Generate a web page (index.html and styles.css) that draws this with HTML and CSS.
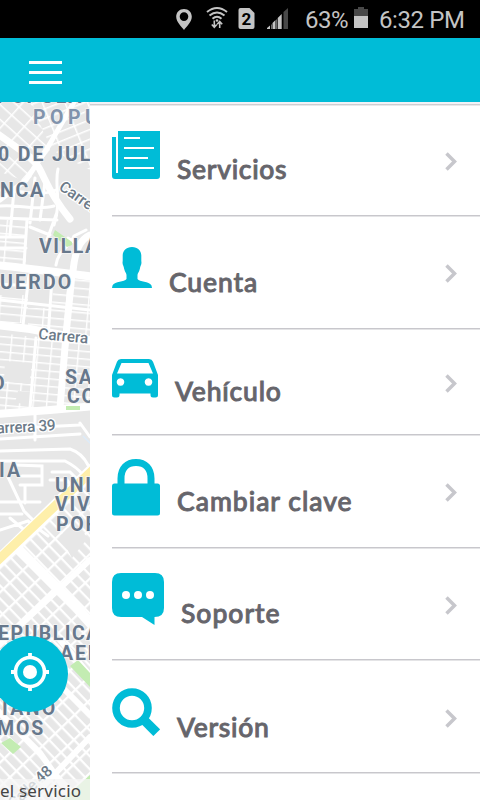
FILE: index.html
```html
<!DOCTYPE html>
<html lang="es">
<head>
<meta charset="utf-8">
<title>Menú</title>
<link rel="stylesheet" href="styles.css">
</head>
<body>
<div class="status">
  <svg class="status-icons" viewBox="0 0 120 38" width="120" height="38">
    <path fill="#c4c4c4" fill-rule="evenodd" d="M14 9c-4.500 0-7.800 3.400-7.800 7.700C6.200 22 12 27 14 30c2-3 7.800-8 7.800-13.300C21.800 12.400 18.500 9 14 9zm0 3.300a4.300 4.300 0 1 1 0 8.600 4.300 4.300 0 0 1 0-8.600z"/>
    <g fill="none" stroke="#c4c4c4" stroke-width="2">
      <path d="M37 12q10-8 20 0M39.500 15.500q7.500-6 15 0M42.500 18.700q4.500-4 9 0"/>
      <path stroke-width="1.600" d="M44.300 20.500v6.500m-2.500-2.500 2.500 2.800 2.500-2.800M49.700 28v-6m-2.500 2.200 2.500-2.700 2.500 2.700"/>
    </g>
    <circle cx="47" cy="20.500" r="1.300" fill="#c4c4c4"/>
    <path fill="#c4c4c4" d="M70.500 8h9l5 5v14q0 2-2 2h-12q-2 0-2-2V10q0-2 2-2z"/>
    <text x="76.500" y="24.500" class="sim">2</text>
    <path fill="#c4c4c4" d="M97 29v-1l3-2.500V29zM102.500 29v-6l3-3v9zM107.700 29V18l4-4v15z"/>
    <path fill="#c4c4c4" opacity=".55" d="M101 29v-4l1-1v5zM106 29v-9l1-1v10z"/>
    <path fill="#484848" d="M113.500 29V12l4.500-4v21z"/>
  </svg>
  <span class="percent">63%</span>
  <svg class="battery" viewBox="0 0 14 21" width="14" height="21"><path fill="#484848" d="M0 2h4V0h6v2h4v8H0z"/><path fill="#c4c4c4" d="M0 9h14v12H0z"/></svg>
  <span class="clock">6:32 PM</span>
</div>
<header class="bar"><div class="burger"><i></i><i></i><i></i></div></header>
<main class="main">
  <section class="map">
    <svg class="map-art" viewBox="0 102 90 698" width="90" height="698">
      <defs>
        <pattern id="g1" width="21" height="9" patternUnits="userSpaceOnUse" patternTransform="rotate(-22)"><path d="M0 0H21M0 0V9" stroke="#fff" stroke-width="3"/></pattern>
        <pattern id="g2" width="17" height="11" patternUnits="userSpaceOnUse" patternTransform="rotate(42)"><path d="M0 0H17M0 0V11" stroke="#fff" stroke-width="3"/></pattern>
        <pattern id="g3" width="22" height="8" patternUnits="userSpaceOnUse" patternTransform="translate(4 0) rotate(5)"><path d="M0 0H22M0 0V8" stroke="#fff" stroke-width="2.800"/></pattern>
        <pattern id="g4" width="13.500" height="7.600" patternUnits="userSpaceOnUse" patternTransform="rotate(5)"><path d="M0 0H13.500M0 0V7.600" stroke="#fff" stroke-width="2.800"/></pattern>
        <pattern id="g5" width="17.500" height="9" patternUnits="userSpaceOnUse" patternTransform="translate(3 4) rotate(46)"><path d="M0 0H17.500M0 0V9" stroke="#fff" stroke-width="4.600"/></pattern>
      </defs>
      <path fill="#e7e7e7" d="M0 102h90v698H0z"/>
      <path fill="url(#g1)" d="M30 102h60v68L52 150z"/>
      <path fill="url(#g2)" d="M0 102h32l18 48-22 32-28-10z"/>
      <path fill="url(#g3)" d="M0 220h26v42H0zM72 274h18v60H70zM53 290h18v40H50zM0 295h28v28H0zM28 308h30v22H28z"/>
      <path fill="url(#g4)" d="M0 333 90 344v62l-90 6z"/>
      <path fill="#e7e7e7" d="M5 361l27 2-3 21-25-3zM29 285h22v20H29zM18 391l14 1-2 12-15-1z"/>
      <path fill="url(#g5)" d="M0 552 90 466v334H0z"/>
      <path fill="#e7e7e7" d="M60 536l14-14 14 16-16 20z"/>
      <g fill="none" stroke="#fff" stroke-linecap="round">
        <path stroke-width="8" d="M-5 265C20 267 62 273 95 277M-5 325l35 4 65 12M-5 414l55-4 45-4"/>
        <path stroke-width="7" d="M-5 132 30 157c16 14 10 25 40 62M72 274 66 335 60 408M90 235c-11 5-15 17-17 36"/>
        <path stroke-width="5" d="M26 180 48 147 74 102M0 200l26-20"/>
        <path stroke-width="3" d="M54 225c8-24 0-40 4-56M0 190c15-1 38 8 56 0M0 206c18-2 35 5 54 0M0 218l57 2M14 190l-4 45M35 178l-5 45M45 182l-5 38M27 220l-3 45M0 237h26M0 248h26M30 227l20 8M57 212l-10 28M56 265c2-15 14-18 18-29l12-6M68 238l12 8M0 300l90 10M29 275l-6 50M52 278l-4 60M0 284l30 2M36 338l-6 70M68 335l-8 70"/>
        <path stroke-width="3" d="M0 439l80-5M0 451l70-2q12 4 18 16M0 461h65q12 6 18 14M0 429l80-4M35 415v25M80 423l10 14M52 472h18l10 10M50 480h17l6 8M15 465l27 1v19H20M22 476h20M8 477l16 34 10 10M0 502h40M0 514h22M0 530l28-9 20 15M10 518l18 15M25 485v18"/>
        <path stroke-width="10" d="M19 550 76 607 92 625"/>
        <path stroke-width="6" d="M-4 648 90 560M60 640l34 40M-5 708l45 45 35 50M30 800l60-63M55 680l35 35"/>
      </g>
      <path fill="#c3ecb2" d="M55 230l17 12v3l-5 2-14-12zM66 406h14v4H66zM70 666l8-6 12 13v14zM10 738l11 9-8 7-12-11zM62 800l28-25v25z"/>
      <path stroke="#dcebfa" stroke-width="1.500" d="M83 436l8 8"/>
      <path stroke="#fff" stroke-width="12" d="M-4 563 94 468"/>
      <path stroke="#feefaa" stroke-width="9" d="M-4 562 94 469"/>
      <g class="place">
        <text x="-3" y="102.500">POPULA</text>
        <text class="light" x="33" y="124">POPU</text>
        <text x="-2" y="161" textLength="94">0 DE JUL</text>
        <text x="0" y="197" textLength="45">NCA</text>
        <text x="39" y="253" textLength="61">VILLA</text>
        <text x="0" y="289" textLength="73">UERDO</text>
        <text x="-8" y="390">D</text>
        <text x="65" y="384">SA</text>
        <text x="67" y="403">CO</text>
        <text x="-1" y="477" textLength="23">IA</text>
        <text x="55" y="492">UNI</text>
        <text x="55" y="511">VIV</text>
        <text x="56" y="531">POR</text>
        <text x="-2" y="640" textLength="103">EPUBLICA</text>
        <text x="60" y="660">AEL</text>
        <text x="2" y="715" textLength="55">IANO</text>
        <text x="-3" y="735" textLength="48">MOS</text>
      </g>
      <g class="street">
        <text transform="translate(58 189) rotate(35)">Carrera</text>
        <text transform="translate(38 339) rotate(5)" textLength="50">Carrera</text>
        <text transform="translate(-13 434) rotate(-3)" textLength="69">Carrera 39</text>
        <text transform="translate(14 809) rotate(-43)" textLength="54">Calle 48</text>
      </g>
    </svg>
    <div class="notice">el servicio</div>
    <div class="locate">
      <svg viewBox="0 0 76 76" width="76" height="76"><g fill="none" stroke="#fff"><circle cx="38" cy="36" r="14.500" stroke-width="3.600"/><path stroke-width="3.800" d="M38 17v5m0 28v5M19 36h5m28 0h5"/></g><circle cx="38" cy="36" r="7" fill="#fff"/></svg>
    </div>
  </section>
  <nav class="menu">
    <a class="item servicios">
      <svg viewBox="0 0 48 48" width="48" height="48"><path fill="#00bcd7" d="M6 0h42v45q0 3-3 3H3q-3 0-3-3V6h4v36h2z"/><path fill="none" stroke="#fff" stroke-width="2" d="M12 7h16M12 17h30M12 27h24M12 37h30"/></svg>
      <span>Servicios</span><svg class="chev" viewBox="0 0 12 19" width="12" height="19"><path d="M1.500 1.500 9.500 9.500 1.500 17.500"/></svg>
    </a>
    <a class="item cuenta">
      <svg viewBox="0 0 40 41" width="40" height="41"><path fill="#00bcd7" d="M20 0c-6 0-9.500 4-9.300 9v5c-.7 4 1 4 1.500 8 .7 3 2.300 4 2.300 6v4c-2 3-11.500 2-14 6.500L0 41h40l-.5-2.500c-2.500-4.500-12-3.500-14-6.500v-4c0-2 1.700-3 2.300-6 .5-4 2.200-4 1.500-8V9C29.500 4 26 0 20 0z"/></svg>
      <span>Cuenta</span><svg class="chev" viewBox="0 0 12 19" width="12" height="19"><path d="M1.500 1.500 9.500 9.500 1.500 17.500"/></svg>
    </a>
    <a class="item vehiculo">
      <svg viewBox="0 0 46 39" width="46" height="39"><path fill="#00bcd7" fill-rule="evenodd" d="M9 0h28q3 0 4 2.700L46 16v20q0 2.500-2.500 2.500H41q-2.500 0-2.500-2.500v-1.500h-31V36q0 2.500-2.500 2.500H2.500Q0 38.500 0 36V16L5 2.700Q6 0 9 0zm.5 4L5 14.500h36L36.500 4zM8.500 19.200a3.800 3.800 0 1 0 .01 0zm28 0a3.800 3.800 0 1 0 .01 0z"/></svg>
      <span>Vehículo</span><svg class="chev" viewBox="0 0 12 19" width="12" height="19"><path d="M1.500 1.500 9.500 9.500 1.500 17.500"/></svg>
    </a>
    <a class="item clave">
      <svg viewBox="0 0 48 57" width="48" height="57"><rect y="24.500" width="48" height="32" rx="2.500" fill="#00bcd7"/><path fill="none" stroke="#00bcd7" stroke-width="7" d="M9 27v-7.500C9 9.500 15 3.500 24 3.500s15 6 15 16V27"/></svg>
      <span>Cambiar clave</span><svg class="chev" viewBox="0 0 12 19" width="12" height="19"><path d="M1.500 1.500 9.500 9.500 1.500 17.500"/></svg>
    </a>
    <a class="item soporte">
      <svg viewBox="0 0 52 52" width="52" height="52"><path fill="#00bcd7" d="M9 0h34q9 0 9 9v26q0 9-9.500 9v8L30 44H9q-9 0-9-9V9q0-9 9-9z"/><g fill="#fff"><circle cx="14" cy="22" r="4"/><circle cx="26" cy="22" r="4"/><circle cx="38" cy="22" r="4"/></g></svg>
      <span>Soporte</span><svg class="chev" viewBox="0 0 12 19" width="12" height="19"><path d="M1.500 1.500 9.500 9.500 1.500 17.500"/></svg>
    </a>
    <a class="item version">
      <svg viewBox="0 0 48 48" width="48" height="48"><g fill="none" stroke="#00bcd7"><circle cx="20" cy="20" r="16" stroke-width="7.600"/><path stroke-width="9.500" d="M32 32l12.700 12.700"/></g></svg>
      <span>Versión</span><svg class="chev" viewBox="0 0 12 19" width="12" height="19"><path d="M1.500 1.500 9.500 9.500 1.500 17.500"/></svg>
    </a>
  </nav>
</main>
</body>
</html>
```
FILE: styles.css
```css
* { box-sizing: border-box; }
body {
  margin: 0;
  width: 480px;
  height: 800px;
  overflow: hidden;
  background: #fff;
  font-family: Roboto, sans-serif;
}
.status {
  display: flex;
  align-items: flex-start;
  height: 38px;
  padding-left: 170px;
  background: #000;
  color: #c4c4c4;
  font-size: 24px;
  line-height: 38px;
  white-space: nowrap;
}
.sim { fill: #000; font: bold 17px Roboto, sans-serif; text-anchor: middle; }
.percent { margin: 1px 0 0 15px; width: 43px; letter-spacing: -.5px; }
.battery { margin: 7px 0 0 6px; }
.clock { margin: 1px 0 0 11px; letter-spacing: -.4px; }
.bar {
  display: flex;
  align-items: center;
  height: 64px;
  padding: 5px 0 0 28.500px;
  background: #00bcd7;
}
.burger { display: flex; flex-direction: column; gap: 6.500px; width: 33px; }
.burger i { height: 3.300px; background: #fff; }
.main { display: flex; height: 698px; }
.map { position: relative; width: 90px; height: 698px; overflow: hidden; }
.map-art { display: block; }
.place {
  fill: #67788c;
  stroke: #f4f4f4;
  stroke-width: 1.500px;
  paint-order: stroke;
  font-size: 19.500px;
  font-weight: 700;
  letter-spacing: 1.800px;
}
.light { fill: #8193ac; letter-spacing: 4.500px; }
.street {
  fill: #6d7b89;
  stroke: #fff;
  stroke-width: 2.500px;
  paint-order: stroke;
  font-size: 15.500px;
  font-weight: 500;
}
.notice {
  position: absolute;
  left: 0;
  bottom: 0;
  width: 90px;
  height: 21px;
  background: rgba(245, 245, 245, .75);
  color: #444;
  font: 17px/24px "Noto Sans", sans-serif;
  letter-spacing: .2px;
  white-space: nowrap;
}
.locate {
  position: absolute;
  left: -8px;
  top: 534px;
  width: 76px;
  height: 76px;
  border-radius: 50%;
  background: #00bcd7;
}
.menu {
  flex: 1;
  padding: 1px 0 0 22.400px;
  background: linear-gradient(#f2f2f6 2px, #c8c7cc 2px, #d4d4d6 3px, #fff 4px);
}
.item {
  display: flex;
  align-items: flex-start;
  height: 112px;
  border-bottom: 1px solid #c8c7cc;
  box-shadow: 0 1px #e4e4e6;
  color: #66656b;
  font: 500 26.500px/32px Lato, sans-serif;
  -webkit-text-stroke: .9px #66656b;
  stroke-linejoin: round;
  white-space: nowrap;
}
.item svg { flex: none; }
.item .chev {
  margin-left: auto;
  margin-right: 23px;
  fill: none;
  stroke: #c7c7cc;
  stroke-width: 3.500px;
  stroke-linejoin: miter;
}
.servicios { height: 113px; padding-top: 28px; }
.servicios span { margin: 22px 0 0 16.600px; letter-spacing: .7px; }
.servicios .chev { margin-top: 21px; }
.cuenta { height: 113px; padding-top: 31px; }
.cuenta span { margin: 19px 0 0 16.600px; letter-spacing: .9px; }
.cuenta .chev { margin-top: 17px; }
.vehiculo { height: 106px; padding-top: 30px; }
.vehiculo span { margin: 16px 0 0 16.600px; letter-spacing: .8px; }
.vehiculo .chev { margin-top: 15px; }
.clave { height: 113px; padding-top: 24px; }
.clave span { margin: 26px 0 0 16.600px; letter-spacing: 1px; }
.clave .chev { margin-top: 24px; }
.soporte { height: 112px; padding-top: 25px; }
.soporte span { margin: 24px 0 0 16.600px; letter-spacing: 1px; }
.soporte .chev { margin-top: 23px; }
.version { height: 113px; padding-top: 28px; }
.version span { margin: 23px 0 0 16.600px; letter-spacing: .7px; }
.version .chev { margin-top: 21px; }
```
